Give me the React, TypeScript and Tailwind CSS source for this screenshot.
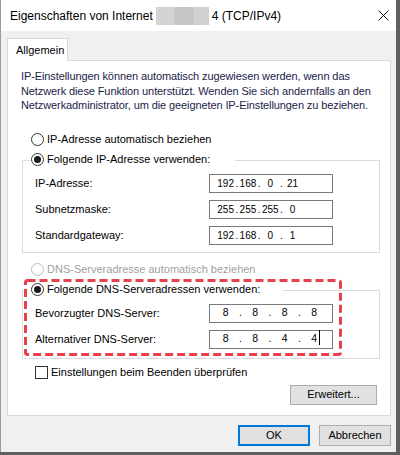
const ff = "font-['Liberation_Sans',Arial,sans-serif]";

function Radio({ checked = false, disabled = false }: { checked?: boolean; disabled?: boolean }) {
  return (
    <span
      className={`flex h-[13px] w-[13px] shrink-0 items-center justify-center rounded-full border bg-white ${
        disabled ? "border-[#bcbcbc]" : "border-[#333333]"
      }`}
    >
      {checked && <span className="h-[7px] w-[7px] rounded-full bg-[#1a1a1a]" />}
    </span>
  );
}

function IpBox({ parts, wide = false, caret = false }: { parts: string[]; wide?: boolean; caret?: boolean }) {
  const field = wide ? "w-[25.5px]" : "w-[17.3px]";
  const dot = wide ? "w-[4px]" : "w-[5px]";
  return (
    <div
      className={`flex h-[19px] w-[124px] items-center border border-[#7a7a7a] bg-white text-black ${
        wide ? "pl-[3px] text-[10.5px]" : "pl-[7px] text-[10px]"
      }`}
    >
      {parts.map((p, i) => (
        <div key={i} className="flex items-center">
          {i > 0 && <span className={`${dot} shrink-0 text-center`}>.</span>}
          <span className={`${field} shrink-0 whitespace-nowrap text-center`}>
            <span className="relative">
              {p}
              {caret && i === parts.length - 1 && (
                <span className="absolute left-full top-[-2px] ml-[2px] h-[15px] w-px bg-black" />
              )}
            </span>
          </span>
        </div>
      ))}
    </div>
  );
}

function Row({ label, parts, wide, caret }: { label: string; parts: string[]; wide?: boolean; caret?: boolean }) {
  return (
    <div className="flex h-[19px] items-center pl-[12px]">
      <span className="w-[174px]">{label}</span>
      <IpBox parts={parts} wide={wide} caret={caret} />
    </div>
  );
}

export default function App() {
  return (
    <div className={`relative h-[455px] w-[400px] bg-[#5f5f5f] text-[11px] text-black ${ff}`}>
      <div className="flex h-[452px] w-[396px] flex-col border-l border-[#9a9a9a]">
        {/* title bar */}
        <div className="flex h-[31px] items-center bg-white pl-[9px] text-[12px]">
          <span>Eigenschaften von Internet</span>
          <span className="mx-[3px] flex h-[18px] w-[53px]">
            <span className="w-[18px] bg-[#d4d4d4]" />
            <span className="w-[20px] bg-[#c6c6c6]" />
            <span className="w-[15px] bg-[#d0d0d0]" />
          </span>
          <span>4 (TCP/IPv4)</span>
          <svg className="ml-auto mr-[7px]" width="11" height="11" viewBox="0 0 11 11">
            <path d="M0.5 0.5 L10.5 10.5 M10.5 0.5 L0.5 10.5" stroke="#111" strokeWidth="1" />
          </svg>
        </div>

        {/* body */}
        <div className="flex flex-1 flex-col bg-[#f0f0f0] pl-[6px] pr-[5px] pt-[7px]">
          <div className="relative z-10 -mb-px flex h-[23px] w-[61px] items-center border border-b-0 border-[#d9d9d9] bg-white pl-[8px]">
            Allgemein
          </div>

          <div className="flex h-[356px] flex-col border border-[#d9d9d9] bg-white">
            <p className="ml-[13px] mt-[8px] whitespace-nowrap leading-[14.5px] tracking-[-0.1px] text-[#1c1c4a]">
              IP-Einstellungen können automatisch zugewiesen werden, wenn das
              <br />
              Netzwerk diese Funktion unterstützt. Wenden Sie sich andernfalls an den
              <br />
              Netzwerkadministrator, um die geeigneten IP-Einstellungen zu beziehen.
            </p>

            <div className="ml-[23px] mt-[19px] flex h-[15px] items-center gap-[3px]">
              <Radio />
              <span>IP-Adresse automatisch beziehen</span>
            </div>

            <div className="ml-[14px] mt-[13px] w-[358px] border border-[#dcdcdc] pb-[7px]">
              <div className="-mt-[9px] ml-[7px] flex h-[16px] w-[205px] items-center gap-[3px] bg-white pl-px">
                <Radio checked />
                <span>Folgende IP-Adresse verwenden:</span>
              </div>
              <div className="mt-[6px] flex flex-col gap-[7px]">
                <Row label="IP-Adresse:" parts={["192", "168", "0", "21"]} />
                <Row label="Subnetzmaske:" parts={["255", "255", "255", "0"]} />
                <Row label="Standardgateway:" parts={["192", "168", "0", "1"]} />
              </div>
            </div>

            <div className="ml-[23px] mt-[9px] flex h-[15px] items-center gap-[3px] text-[#a0a0a0]">
              <Radio disabled />
              <span>DNS-Serveradresse automatisch beziehen</span>
            </div>

            <div className="ml-[14px] mt-[13px] w-[358px] border border-[#dcdcdc] pb-[9px]">
              <div className="-mt-[9px] ml-[5px] flex h-[16px] w-[255px] items-center gap-[3px] bg-white pl-[3px]">
                <Radio checked />
                <span>Folgende DNS-Serveradressen verwenden:</span>
              </div>
              <div className="mt-[6px] flex flex-col gap-[7px]">
                <Row label="Bevorzugter DNS-Server:" parts={["8", "8", "8", "8"]} wide />
                <Row label="Alternativer DNS-Server:" parts={["8", "8", "4", "4"]} wide caret />
              </div>
            </div>

            <div className="ml-[27px] mt-[6px] flex h-[15px] items-center gap-[3px]">
              <span className="h-[13px] w-[13px] border border-[#333333] bg-white" />
              <span>Einstellungen beim Beenden überprüfen</span>
            </div>

            <button className="mr-[13px] mt-[5px] flex h-[20px] w-[87px] items-center justify-center self-end border border-[#adadad] bg-[#e1e1e1]">
              Erweitert...
            </button>
          </div>

          <div className="mt-[9px] flex justify-end gap-[9px]">
            <button className="flex h-[21px] w-[72px] items-center justify-center border-2 border-[#0078d7] bg-[#e1e1e1]">
              OK
            </button>
            <button className="flex h-[21px] w-[72px] items-center justify-center border border-[#adadad] bg-[#e1e1e1]">
              Abbrechen
            </button>
          </div>
        </div>
      </div>

      {/* red dashed annotation */}
      <svg className="absolute left-[24px] top-[279px]" width="318" height="77" viewBox="0 0 318 77">
        <rect
          x="1.5"
          y="1.5"
          width="315"
          height="74"
          rx="2"
          fill="none"
          stroke="#e8414b"
          strokeWidth="3"
          strokeDasharray="8 4"
        />
      </svg>
    </div>
  );
}
